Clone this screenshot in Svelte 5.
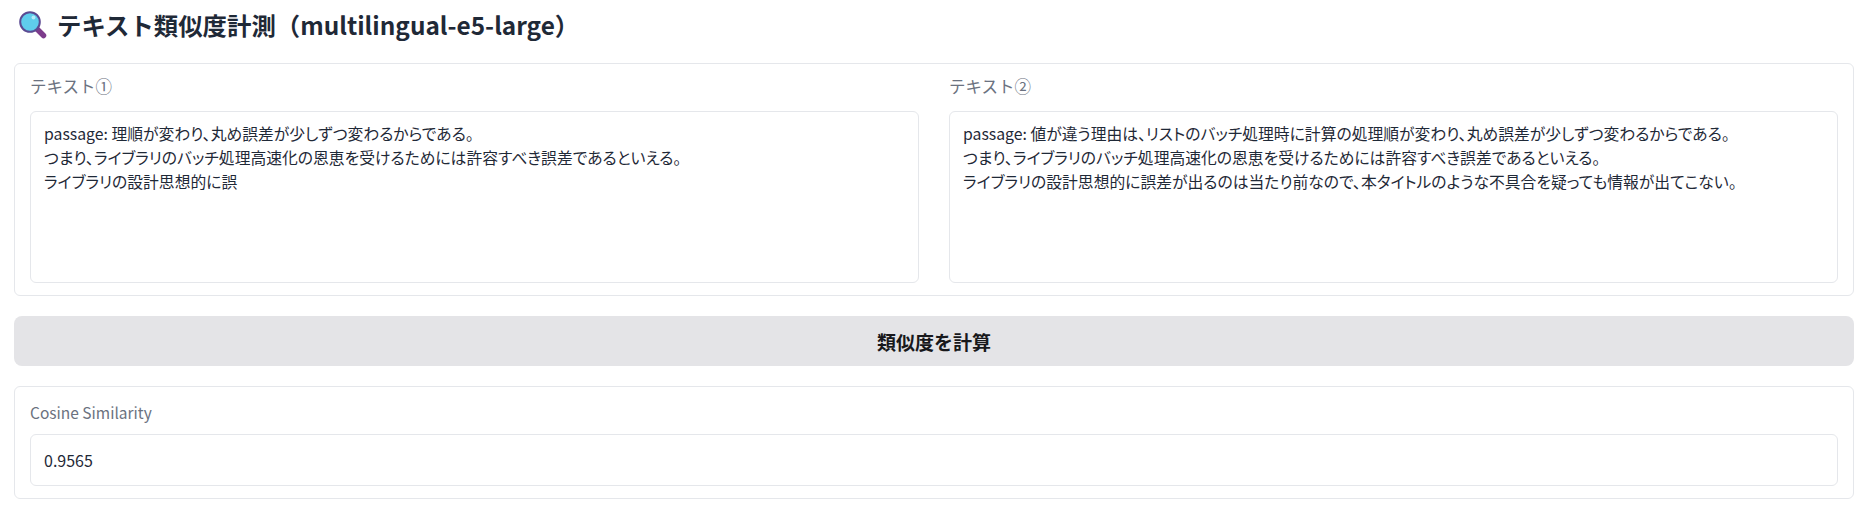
<script>
    let text1 = $state('passage: 理順が変わり、丸め誤差が少しずつ変わるからである。\nつまり、ライブラリのバッチ処理高速化の恩恵を受けるためには許容すべき誤差であるといえる。\nライブラリの設計思想的に誤');
    let text2 = $state('passage: 値が違う理由は、リストのバッチ処理時に計算の処理順が変わり、丸め誤差が少しずつ変わるからである。\nつまり、ライブラリのバッチ処理高速化の恩恵を受けるためには許容すべき誤差であるといえる。\nライブラリの設計思想的に誤差が出るのは当たり前なので、本タイトルのような不具合を疑っても情報が出てこない。');
</script>

<div class="page">
    <h2 class="title">
        <svg class="lens" viewBox="0 0 28 28" width="28" height="28" aria-hidden="true">
            <path d="M18 18 L24.5 24.5" stroke="#7d3c8c" stroke-width="5.5" stroke-linecap="round" />
            <circle cx="11" cy="11" r="9.8" fill="#5fcdec" stroke="#5b4a92" stroke-width="2" />
            <circle cx="14.5" cy="6.5" r="2" fill="#b5ebf8" />
        </svg>
        テキスト類似度計測（multilingual-e5-large）
    </h2>

    <div class="panel inputs">
        <label class="field">
            <span class="label jp">テキスト①</span>
            <textarea bind:value={text1}></textarea>
        </label>
        <label class="field">
            <span class="label jp">テキスト②</span>
            <textarea bind:value={text2}></textarea>
        </label>
    </div>

    <button class="run">類似度を計算</button>

    <div class="panel result">
        <span class="label">Cosine Similarity</span>
        <div class="output">0.9565</div>
    </div>
</div>

<style>
    :global(body) {
        margin: 0;
        background: #fff;
        overflow: hidden;
    }

    .page {
        font-family: "Noto Sans CJK JP", "Noto Sans", sans-serif;
        font-feature-settings: "pkna";
        padding: 0 13px 0 14px;
        color: #1f2937;
    }

    .title {
        display: flex;
        align-items: center;
        gap: 10px;
        margin: 0;
        height: 63px;
        font-size: 24.4px;
        font-weight: 700;
        color: #1f2937;
        box-sizing: border-box;
        padding: 0 0 14px 5px;
        white-space: nowrap;
    }

    .lens {
        flex: none;
    }

    .panel {
        border: 1px solid #e5e7eb;
        border-radius: 6px;
        background: #fff;
        box-sizing: border-box;
    }

    .inputs {
        height: 233px;
        padding: 0 15px;
        display: grid;
        grid-template-columns: 1fr 1fr;
        column-gap: 30px;
    }

    .field {
        display: flex;
        flex-direction: column;
    }

    .label {
        display: block;
        height: 47px;
        line-height: 44px;
        font-size: 15.5px;
        color: #6b7280;
    }

    .label.jp {
        font-size: 16.5px;
    }

    textarea {
        display: block;
        height: 172px;
        padding: 10px 13px;
        border: 1px solid #e5e7eb;
        border-radius: 6px;
        box-sizing: border-box;
        resize: none;
        outline: none;
        font: inherit;
        font-feature-settings: "palt";
        font-size: 15.8px;
        line-height: 24px;
        color: #1f2937;
        background: #fff;
    }

    .run {
        display: block;
        width: 100%;
        height: 50px;
        margin: 20px 0;
        border: none;
        border-radius: 8px;
        background: #e4e4e7;
        font: inherit;
        font-size: 19px;
        font-weight: 700;
        color: #18181b;
    }

    .result {
        height: 113px;
        padding: 0 15px;
    }

    .result .label {
        height: 47px;
        line-height: 50px;
    }

    .output {
        height: 52px;
        line-height: 50px;
        padding: 0 13px;
        border: 1px solid #e5e7eb;
        border-radius: 6px;
        box-sizing: border-box;
        font-size: 16px;
        color: #1f2937;
    }
</style>
